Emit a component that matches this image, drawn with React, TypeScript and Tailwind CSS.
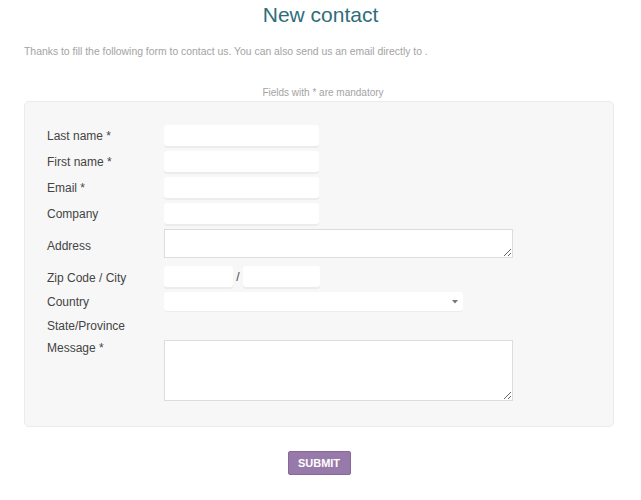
const inputCls =
  "h-[21px] rounded-[3px] bg-white shadow-[0_2px_0_#ececec] outline-none px-1 text-[12px]";

const Label = ({ children, pt }: { children: React.ReactNode; pt?: string }) => (
  <div className={"w-[117px] shrink-0 text-[12px] leading-[14px] text-[#444] " + (pt ?? "")}>
    {children}
  </div>
);

const App = () => {
  return (
    <div className="min-h-[500px] bg-white font-['Liberation_Sans',Arial,sans-serif]">
      <h1 className="pt-[3px] text-center text-[21px] leading-[24px] text-[#2f6d7b]">
        New contact
      </h1>
      <p className="mt-[19px] pl-[24px] text-[10.4px] leading-[12px] text-[#a3a3a3]">
        Thanks to fill the following form to contact us. You can also send us an email directly
        to .
      </p>
      <div className="mx-[24px] w-[590px]">
        <p className="mt-[29px] pl-[8px] text-center text-[10px] leading-[12px] text-[#a3a3a3]">
          Fields with * are mandatory
        </p>
        <form
          className="mt-[2px] rounded-[5px] border border-[#ebebeb] bg-[#f7f7f7] pb-[25px] pl-[22px] pt-[23px]"
          onSubmit={(e) => e.preventDefault()}
        >
          <div className="flex flex-col gap-[5px]">
            <div className="flex items-center">
              <Label>Last name *</Label>
              <input className={inputCls + " w-[155px]"} />
            </div>
            <div className="flex items-center">
              <Label>First name *</Label>
              <input className={inputCls + " w-[155px]"} />
            </div>
            <div className="flex items-center">
              <Label>Email *</Label>
              <input className={inputCls + " w-[155px]"} />
            </div>
            <div className="flex items-center">
              <Label>Company</Label>
              <input className={inputCls + " w-[155px]"} />
            </div>
            <div className="flex items-center">
              <Label pt="pt-[4px]">Address</Label>
              <textarea className="block h-[29px] w-[349px] resize border border-[#dcdcdc] bg-white outline-none" />
            </div>
            <div className="mt-[3px] flex items-center">
              <Label pt="pt-[2px]">Zip Code / City</Label>
              <input className={inputCls + " w-[69px]"} />
              <span className="w-[10px] text-center text-[12px] text-[#444]">/</span>
              <input className={inputCls + " w-[77px]"} />
            </div>
            <div className="flex items-center">
              <Label>Country</Label>
              <div className="flex h-[19px] w-[299px] items-center justify-end rounded-[3px] bg-white pr-[5px] shadow-[0_1px_0_#ececec]">
                <svg width="6" height="4" viewBox="0 0 6 4">
                  <path d="M0 0h6L3 3.5z" fill="#777" />
                </svg>
              </div>
            </div>
            <div className="flex h-[19px] items-center">
              <Label>State/Province</Label>
            </div>
            <div className="flex items-start">
              <Label pt="pt-[1px]">Message *</Label>
              <textarea className="block h-[61px] w-[349px] resize border border-[#dcdcdc] bg-white outline-none" />
            </div>
          </div>
        </form>
        <div className="mt-[24px] flex justify-center">
          <button
            type="button"
            className="h-[24px] w-[63px] rounded-[2px] border border-[#86699a] bg-[#977aa9] text-[11px] font-bold text-white"
          >
            SUBMIT
          </button>
        </div>
      </div>
    </div>
  );
};

export default App;
